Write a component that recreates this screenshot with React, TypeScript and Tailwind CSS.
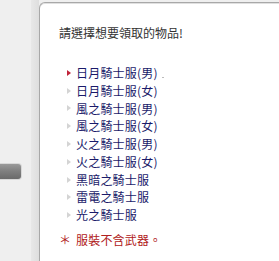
import React from "react";

const items = [
  "日月騎士服(男)",
  "日月騎士服(女)",
  "風之騎士服(男)",
  "風之騎士服(女)",
  "火之騎士服(男)",
  "火之騎士服(女)",
  "黑暗之騎士服",
  "雷電之騎士服",
  "光之騎士服",
];

function Bullet({ active }: { active: boolean }) {
  return (
    <svg width="6" height="8" viewBox="0 0 6 8" className="shrink-0">
      <path d="M1 1 L5 4 L1 7 Z" fill={active ? "#c0243a" : "#d4d4d4"} />
    </svg>
  );
}

export default function App() {
  return (
    <div
      className="flex w-[279px] h-[261px] bg-[#efefef] overflow-hidden text-[12px]"
      style={{ fontFamily: '"Noto Sans CJK TC", "Noto Sans", sans-serif' }}
    >
      <div className="w-[39px] shrink-0 flex">
        <div className="w-[31px] flex flex-col">
          <div className="mt-[163px] w-[22px] h-[17px] rounded-r-[4px] border border-l-0 border-[#d8d8d8] bg-gradient-to-b from-[#9a9a9a] via-[#7e7e7e] to-[#6a6a6a]" />
        </div>
        <div className="w-[8px] bg-gradient-to-r from-[#e8e8e8] to-[#dedede]" />
      </div>
      <div className="mt-[2px] flex-1 bg-white border-l border-t border-[#a8a8a8] rounded-tl-[6px] shadow-[inset_0_1px_0_#e0e0e0]">
        <div className="pl-[19px] pt-[21px] text-[#333333] leading-[18px]">
          請選擇想要領取的物品!
        </div>
        <div className="pl-[26px] pt-[22px] flex flex-col">
          {items.map((t, i) => (
            <div key={t} className="flex items-center gap-[4px] h-[17.8px]">
              <Bullet active={i === 0} />
              <span className="text-[#1a1a6a] leading-[18px] tracking-[0.2px]">
                {t}
              </span>
              {i === 0 && <span className="w-[2px] h-[1px] bg-[#bbbbbb] mt-[10px]" />}
            </div>
          ))}
        </div>
        <div className="pl-[19px] pt-[7px] text-[#b02020] leading-[18px] flex items-center">
          <span className="w-[17px]">＊</span>
          <span className="tracking-[0.2px]">服裝不含武器。</span>
        </div>
      </div>
    </div>
  );
}
